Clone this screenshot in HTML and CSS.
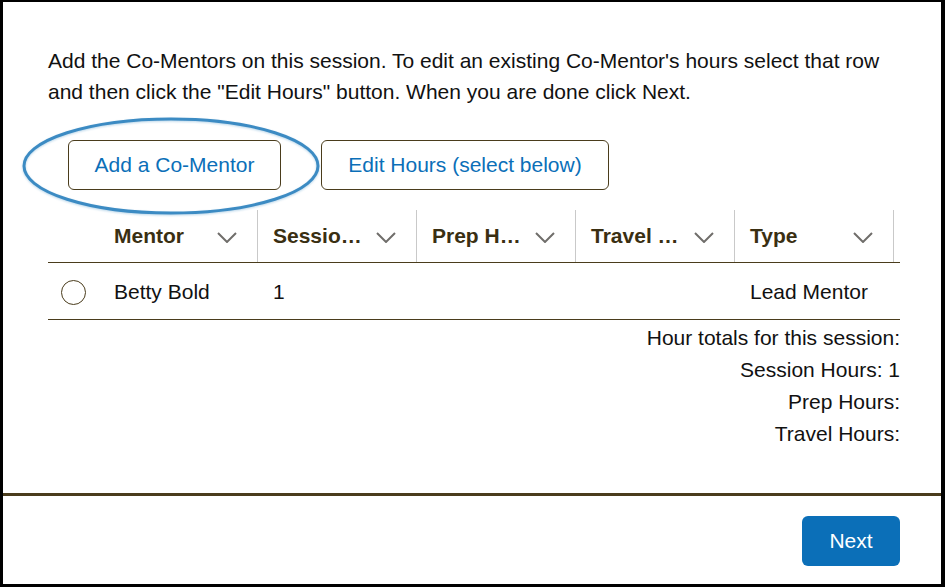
FILE: index.html
```html
<!DOCTYPE html>
<html>
<head>
<meta charset="utf-8">
<link rel="stylesheet" href="styles.css">
</head>
<body>
<div class="dialog">
  <div class="content">
    <p class="intro">Add the Co-Mentors on this session. To edit an existing Co-Mentor's hours select that row and then click the "Edit Hours" button. When you are done click Next.</p>
    <div class="actions">
      <div class="highlight-wrap">
        <button class="btn">Add a Co-Mentor</button>
        <svg class="ring" width="300" height="100" viewBox="0 0 300 100"><ellipse cx="150" cy="50" rx="147" ry="47" fill="none" stroke="#3c8bc3" stroke-width="3"/></svg>
      </div>
      <button class="btn btn-wide">Edit Hours (select below)</button>
    </div>
    <div class="table">
      <div class="thead">
        <div class="th th-radio"></div>
        <div class="th"><span>Mentor</span><svg class="chev" width="20" height="11" viewBox="0 0 20 11"><polyline points="1,1 10,10 19,1" fill="none" stroke="#706e6b" stroke-width="2"/></svg></div>
        <div class="th"><span>Sessio…</span><svg class="chev" width="20" height="11" viewBox="0 0 20 11"><polyline points="1,1 10,10 19,1" fill="none" stroke="#706e6b" stroke-width="2"/></svg></div>
        <div class="th"><span>Prep H…</span><svg class="chev" width="20" height="11" viewBox="0 0 20 11"><polyline points="1,1 10,10 19,1" fill="none" stroke="#706e6b" stroke-width="2"/></svg></div>
        <div class="th"><span>Travel …</span><svg class="chev" width="20" height="11" viewBox="0 0 20 11"><polyline points="1,1 10,10 19,1" fill="none" stroke="#706e6b" stroke-width="2"/></svg></div>
        <div class="th"><span>Type</span><svg class="chev" width="20" height="11" viewBox="0 0 20 11"><polyline points="1,1 10,10 19,1" fill="none" stroke="#706e6b" stroke-width="2"/></svg></div>
        <div class="th th-end"></div>
      </div>
      <div class="trow">
        <div class="td td-radio"><span class="radio"></span></div>
        <div class="td">Betty Bold</div>
        <div class="td">1</div>
        <div class="td"></div>
        <div class="td"></div>
        <div class="td">Lead Mentor</div>
        <div class="td"></div>
      </div>
    </div>
    <div class="totals">
      <div>Hour totals for this session:</div>
      <div>Session Hours: 1</div>
      <div>Prep Hours:</div>
      <div>Travel Hours:</div>
    </div>
  </div>
  <div class="footer">
    <button class="btn-primary">Next</button>
  </div>
</div>
</body>
</html>
```
FILE: styles.css
```css
html, body {
  margin: 0;
  padding: 0;
  background: #fff;
}
body {
  font-family: "Liberation Sans", Arial, sans-serif;
  color: #111;
}
.dialog {
  box-sizing: border-box;
  width: 945px;
  height: 587px;
  border-style: solid;
  border-color: #000;
  border-width: 2px 4px 3px 3px;
  display: flex;
  flex-direction: column;
}
.content {
  height: 491px;
  flex: none;
  padding: 0 41px 0 45px;
  box-sizing: border-box;
}
.intro {
  margin: 43px 0 0 0;
  font-size: 21px;
  line-height: 31px;
  color: #111;
}
.actions {
  display: flex;
  gap: 40px;
  margin-top: 33px;
  padding-left: 20px;
}
.highlight-wrap {
  position: relative;
}
.ring {
  position: absolute;
  left: -47px;
  top: -24px;
  filter: drop-shadow(0 1px 1px rgba(60, 139, 195, 0.35));
  pointer-events: none;
}
.btn {
  box-sizing: border-box;
  height: 50px;
  width: 213px;
  border: 1px solid #4a3c1c;
  border-radius: 6px;
  background: #fff;
  color: #0b6fb8;
  font-family: "Liberation Sans", Arial, sans-serif;
  font-size: 21px;
  padding: 0;
}
.btn-wide {
  width: 288px;
}
.table {
  margin-top: 20px;
  width: 852px;
}
.thead, .trow {
  display: grid;
  grid-template-columns: 51px repeat(5, 159px) 1fr;
}
.thead {
  height: 52px;
  border-bottom: 1px solid #4a3c1c;
}
.th {
  display: flex;
  align-items: center;
  justify-content: space-between;
  padding: 0 20px 0 15px;
  border-right: 1px solid #c9c9c9;
  font-weight: bold;
  font-size: 21px;
  color: #3a2f12;
}
.th-radio, .th-end {
  border-right: none;
  padding: 0;
}
.chev {
  display: block;
  margin-top: 2px;
}
.trow {
  height: 56px;
  border-bottom: 1px solid #4a3c1c;
}
.td {
  display: flex;
  align-items: center;
  padding-left: 15px;
  padding-top: 2px;
  font-size: 21px;
  color: #111;
}
.td-radio {
  padding-left: 13px;
}
.radio {
  display: block;
  width: 25px;
  height: 25px;
  box-sizing: border-box;
  border: 1px solid #4a3c1c;
  border-radius: 50%;
}
.totals {
  width: 852px;
  text-align: right;
  font-size: 21px;
  line-height: 32px;
  color: #111;
  margin-top: 2px;
}
.footer {
  flex: 1;
  border-top: 3px solid #4a3c1c;
  display: flex;
  justify-content: flex-end;
  align-items: flex-start;
  padding: 20px 41px 0 0;
}
.btn-primary {
  width: 98px;
  height: 50px;
  background: #0b6fb8;
  color: #fff;
  border: none;
  border-radius: 6px;
  font-family: "Liberation Sans", Arial, sans-serif;
  font-size: 21px;
  padding: 0;
}
```
